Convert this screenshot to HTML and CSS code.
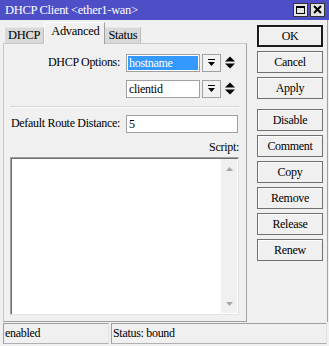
FILE: index.html
```html
<!DOCTYPE html>
<html lang="en">
<head>
    <meta charset="UTF-8">
    <title>DHCP Client &lt;ether1-wan&gt;</title>
    <link rel="stylesheet" href="styles.css">
</head>
<body>
    <div class="window">
        <div class="titlebar">
            <span class="title">DHCP Client &lt;ether1-wan&gt;</span>
            <div class="title-btns">
                <span class="tbtn">
                    <svg width="13" height="12" viewBox="0 0 13 12"><rect x="2.5" y="2.5" width="8" height="7" fill="none" stroke="#000"/><rect x="2" y="2" width="9" height="2" fill="#000"/></svg>
                </span>
                <span class="tbtn">
                    <svg width="13" height="12" viewBox="0 0 13 12"><path d="M3 2 L10 9 M10 2 L3 9" stroke="#000" stroke-width="2"/></svg>
                </span>
            </div>
        </div>

        <div class="main">
            <div class="left">
                <div class="tabs">
                    <div class="tab">DHCP</div>
                    <div class="tab active">Advanced</div>
                    <div class="tab">Status</div>
                </div>
                <div class="panel">
                    <div class="row">
                        <label class="lbl">DHCP Options:</label>
                        <div class="field short selected"><span>hostname</span></div>
                        <span class="drop">
                            <svg width="9" height="9" viewBox="0 0 9 9"><rect x="1" y="1" width="7" height="1" fill="#000"/><polygon points="1,4 8,4 4.5,8" fill="#000"/></svg>
                        </span>
                        <span class="updown">
                            <svg width="10" height="13" viewBox="0 0 10 13"><polygon points="0,5.5 10,5.5 5,0.5" fill="#000"/><polygon points="0,7.5 10,7.5 5,12.5" fill="#000"/></svg>
                        </span>
                    </div>
                    <div class="row">
                        <span class="lbl"></span>
                        <div class="field short"><span>clientid</span></div>
                        <span class="drop">
                            <svg width="9" height="9" viewBox="0 0 9 9"><rect x="1" y="1" width="7" height="1" fill="#000"/><polygon points="1,4 8,4 4.5,8" fill="#000"/></svg>
                        </span>
                        <span class="updown">
                            <svg width="10" height="13" viewBox="0 0 10 13"><polygon points="0,5.5 10,5.5 5,0.5" fill="#000"/><polygon points="0,7.5 10,7.5 5,12.5" fill="#000"/></svg>
                        </span>
                    </div>
                    <div class="sep"></div>
                    <div class="row">
                        <label class="lbl">Default Route Distance:</label>
                        <div class="field wide"><span>5</span></div>
                    </div>
                    <div class="script-lbl">Script:</div>
                    <div class="textarea">
                        <div class="text"></div>
                        <div class="scroll">
                            <svg width="7" height="4" viewBox="0 0 7 4"><polygon points="0,4 7,4 3.5,0" fill="#a8a8a8"/></svg>
                            <svg width="7" height="4" viewBox="0 0 7 4"><polygon points="0,0 7,0 3.5,4" fill="#a8a8a8"/></svg>
                        </div>
                    </div>
                </div>
            </div>

            <div class="buttons">
                <div class="btn default">OK</div>
                <div class="btn">Cancel</div>
                <div class="btn">Apply</div>
                <div class="btn spaced">Disable</div>
                <div class="btn">Comment</div>
                <div class="btn">Copy</div>
                <div class="btn">Remove</div>
                <div class="btn">Release</div>
                <div class="btn">Renew</div>
            </div>
        </div>

        <div class="statusbar">
            <div class="cell first">enabled</div>
            <div class="cell rest">Status: bound</div>
        </div>
    </div>
</body>
</html>
```

FILE: styles.css
```css
body {
    margin: 0;
    background-color: #f0f0f0;
    font-family: 'Liberation Serif', serif;
    font-size: 12px;
    letter-spacing: -0.3px;
    color: #000;
}
.window {
    width: 329px;
    height: 346px;
    display: flex;
    flex-direction: column;
}
.titlebar {
    height: 20px;
    background-color: #4e4ec6;
    color: #fff;
    display: flex;
    align-items: center;
    justify-content: space-between;
    padding: 0 4px 0 5px;
    font-size: 12.5px;
}
.title-btns {
    display: flex;
    gap: 2px;
}
.tbtn {
    width: 13px;
    height: 12px;
    background-color: #e4e4e4;
    border: 1px solid #333;
    display: flex;
}
.main {
    display: flex;
    height: 302px;
    border-right: 1px solid #a0a0a0;
    width: 328px;
    box-sizing: border-box;
}
.left {
    padding-left: 3px;
    display: flex;
    flex-direction: column;
}
.tabs {
    display: flex;
    align-items: flex-end;
    height: 22px;
    margin-top: 1px;
    padding-left: 2px;
}
.tab {
    height: 15px;
    line-height: 15px;
    padding: 0 3px 0 3px;
    background-color: #d9d9d9;
    border-top: 1px solid #e8e8e8;
    border-right: 1px solid #bdbdbd;
    font-size: 12.5px;
}
.tab.active {
    position: relative;
    height: 21px;
    line-height: 17px;
    margin-bottom: -1px;
    padding: 0 5px 0 6px;
    background-color: #f0f0f0;
    border-top: 1px solid #fff;
    border-left: 1px solid #fff;
    border-right: 1px solid #a0a0a0;
}
.panel {
    width: 244px;
    height: 280px;
    box-sizing: border-box;
    border: 1px solid #a0a0a0;
    border-left-color: #c8c8c8;
    border-top-color: #c8c8c8;
    padding: 10px 7px 0 6px;
}
.row {
    display: flex;
    align-items: center;
    height: 18px;
    margin-bottom: 8px;
}
.lbl {
    width: 110px;
    text-align: right;
    margin-right: 6px;
    white-space: nowrap;
}
.field {
    height: 18px;
    box-sizing: border-box;
    border: 1px solid #a0a0a0;
    background-color: #fff;
    padding: 1px;
    line-height: 14px;
}
.field span {
    display: block;
    height: 14px;
    padding-left: 1px;
}
.field.short {
    width: 74px;
}
.field.wide {
    width: 112px;
}
.field.selected span {
    background-color: #3399ff;
    color: #fff;
}
.drop {
    width: 19px;
    height: 18px;
    box-sizing: border-box;
    border: 1px solid #a0a0a0;
    background-color: #f2f2f2;
    margin-left: 2px;
    display: flex;
    align-items: center;
    justify-content: center;
}
.updown {
    display: flex;
    margin-left: 4px;
}
.sep {
    height: 1px;
    background-color: #d4d4d4;
    border-bottom: 1px solid #fafafa;
    margin: 0 0 7px;
}
.script-lbl {
    text-align: right;
    line-height: 16px;
    margin-top: -2px;
}
.textarea {
    margin-top: 2px;
    height: 158px;
    box-sizing: border-box;
    border: 1px solid #a0a0a0;
    border-right-color: #e3e3e3;
    border-bottom-color: #e3e3e3;
    box-shadow: inset 1px 1px 0 #6e6e6e;
    background-color: #fff;
    display: flex;
    padding: 1px 1px 1px 2px;
}
.text {
    flex: 1;
}
.scroll {
    width: 16px;
    background-color: #f0f0f0;
    display: flex;
    flex-direction: column;
    align-items: center;
    justify-content: space-between;
    padding: 8px 0 7px;
}
.buttons {
    display: flex;
    flex-direction: column;
    gap: 4px;
    padding-top: 5px;
    margin-left: 10px;
}
.btn {
    width: 66px;
    height: 22px;
    box-sizing: border-box;
    border: 1px solid #707070;
    box-shadow: inset 1px 1px 0 #fcfcfc;
    background-color: #f0f0f0;
    text-align: center;
    line-height: 20px;
}
.btn.default {
    border: 2px solid #1c1c1c;
    line-height: 18px;
}
.btn.spaced {
    margin-top: 6px;
}
.statusbar {
    display: flex;
    padding: 1px 0 0 3px;
    gap: 2px;
}
.cell {
    height: 21px;
    box-sizing: border-box;
    border: 1px solid #a0a0a0;
    border-right-color: #e3e3e3;
    border-bottom-color: #b0b0b0;
    line-height: 19px;
    padding-left: 1px;
}
.cell.first {
    width: 106px;
}
.cell.rest {
    flex: 1;
    margin-right: 2px;
}
```
